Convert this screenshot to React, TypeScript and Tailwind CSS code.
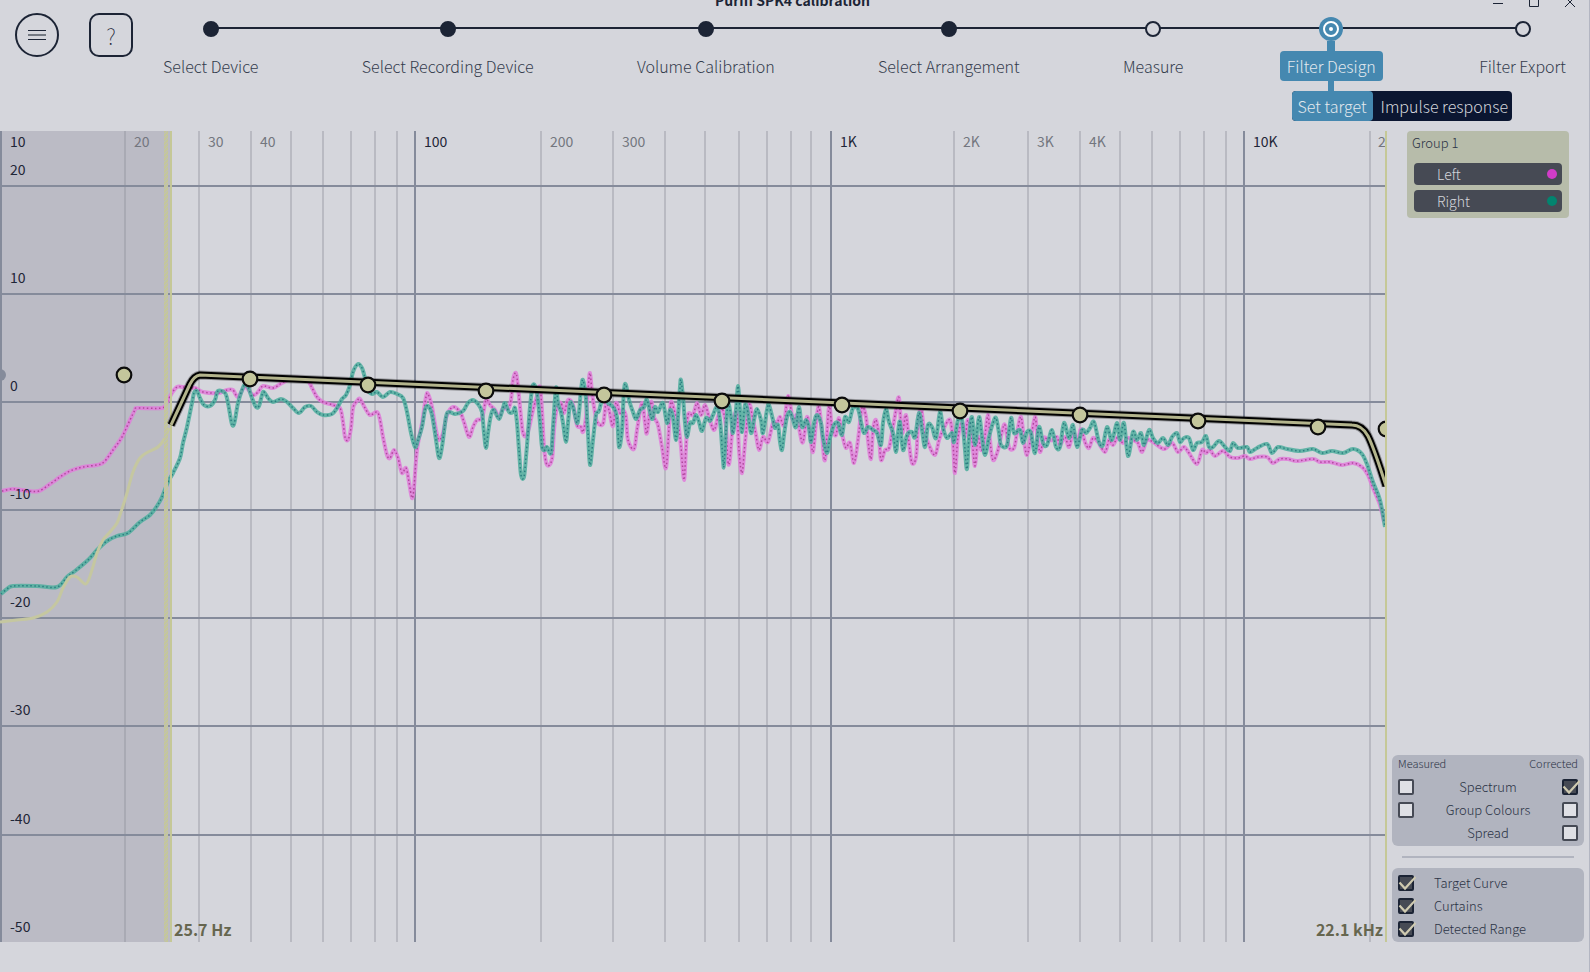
import { useState } from "react";
import clsx from "clsx";

const STEPS = [
  { label: "Select Device", state: "done" },
  { label: "Select Recording Device", state: "done" },
  { label: "Volume Calibration", state: "done" },
  { label: "Select Arrangement", state: "done" },
  { label: "Measure", state: "todo" },
  { label: "Filter Design", state: "active" },
  { label: "Filter Export", state: "todo" },
];

const CHANNELS = [
  { name: "Left", dot: "bg-[#d13cc8]" },
  { name: "Right", dot: "bg-[#03846f]" },
];

// frequency grid: x position, label, decade line or not
const FREQ_LINES: { x: number; label?: string; major?: boolean }[] = [
  { x: 1, label: "10", major: true },
  { x: 125, label: "20" },
  { x: 199, label: "30" },
  { x: 251, label: "40" },
  { x: 291 },
  { x: 323 },
  { x: 351 },
  { x: 375 },
  { x: 397 },
  { x: 415, label: "100", major: true },
  { x: 541, label: "200" },
  { x: 613, label: "300" },
  { x: 665 },
  { x: 705 },
  { x: 739 },
  { x: 767 },
  { x: 791 },
  { x: 811 },
  { x: 831, label: "1K", major: true },
  { x: 954, label: "2K" },
  { x: 1028, label: "3K" },
  { x: 1080, label: "4K" },
  { x: 1120 },
  { x: 1152 },
  { x: 1180 },
  { x: 1204 },
  { x: 1226 },
  { x: 1244, label: "10K", major: true },
  { x: 1370, label: "20K" },
];

const DB_LINES = [
  { y: 186, label: "20" },
  { y: 294, label: "10" },
  { y: 402, label: "0" },
  { y: 510, label: "-10" },
  { y: 618, label: "-20" },
  { y: 726, label: "-30" },
  { y: 835, label: "-40" },
  { y: 943, label: "-50" },
];

const HANDLES = [
  [124, 375],
  [250, 379],
  [368, 385],
  [486, 391],
  [604, 395],
  [722, 401],
  [842, 405],
  [960, 411],
  [1080, 415],
  [1198, 421],
  [1318, 427],
  [1386, 429],
];

const RIGHT_TRACE =
  "1,594 7,589 13,586 37,586 57,587 67,577 75,571 88,560 97,550 107,541 117,536 128,533 140,522 150,515 157,506 162,497 168,482 173,473 180,458 183,443 187,427 192,403 194,393 197,391 200,398 204,405 210,406 215,400 218,391 225,393 228,403 231,420 233,426 235,420 238,403 242,390 245,384 248,387 252,398 256,407 259,406 262,395 264,392 268,398 273,402 281,399 287,402 293,408 299,413 305,407 311,406 317,412 323,415 332,414 337,408 342,399 346,395 350,385 353,372 358,364 362,368 365,378 368,390 372,394 377,392 383,397 390,392 397,394 403,398 407,412 411,433 415,447 418,440 422,427 425,410 428,406 432,415 436,440 439,458 442,447 446,417 449,412 455,414 463,411 468,403 473,400 478,404 482,412 484,433 486,448 488,433 491,415 494,410 499,419 503,408 505,403 509,412 513,412 515,408 517,423 519,450 521,475 524,477 526,457 528,433 530,407 533,385 537,393 540,423 542,447 545,450 547,447 551,453 553,427 556,388 558,403 561,412 563,423 566,442 568,423 570,403 573,407 577,423 579,413 581,390 583,380 586,400 588,433 590,465 593,440 596,415 599,411 603,397 608,403 613,407 617,417 619,447 622,430 624,390 626,385 629,400 633,412 636,419 640,410 644,407 647,400 652,419 655,407 658,412 663,403 667,423 670,410 673,417 676,440 678,417 680,387 681,380 683,397 685,423 687,437 690,423 693,423 696,415 699,422 702,431 706,418 710,421 713,415 717,407 720,420 723,460 724,465 726,430 728,403 731,417 733,433 736,410 738,386 740,410 742,432 745,405 748,413 751,433 754,420 757,409 761,420 763,433 767,410 769,405 773,420 775,428 778,425 780,442 782,450 784,435 787,417 790,412 793,420 796,427 799,407 802,427 806,420 809,428 811,442 814,423 817,415 821,423 823,438 827,453 830,438 834,425 838,423 842,435 845,417 849,422 853,408 858,409 861,422 864,433 868,427 873,430 877,433 881,445 883,423 886,409 889,422 893,433 896,452 898,433 900,422 903,450 907,435 912,432 915,437 919,413 922,430 925,447 928,425 932,427 936,438 940,412 943,428 947,438 952,433 954,442 958,420 962,420 965,450 967,469 969,437 972,417 975,445 979,417 982,437 985,455 989,437 993,423 996,418 999,433 1001,445 1007,445 1011,418 1014,433 1020,430 1023,443 1027,432 1031,433 1035,453 1039,427 1043,443 1047,445 1052,430 1056,447 1060,447 1064,423 1069,438 1073,425 1077,447 1082,430 1086,433 1090,428 1094,422 1099,442 1103,445 1107,427 1112,440 1117,423 1120,440 1124,423 1128,456 1133,432 1137,440 1141,433 1144,445 1149,430 1153,438 1158,443 1163,438 1168,445 1172,437 1177,433 1180,442 1184,438 1189,438 1193,450 1197,443 1202,442 1206,436 1209,447 1213,447 1219,441 1225,447 1230,451 1233,443 1238,448 1247,447 1250,452 1257,448 1267,444 1272,453 1278,447 1287,449 1300,451 1313,449 1322,453 1332,451 1343,453 1353,449 1362,454 1368,467 1373,482 1380,500 1385,527";

const LEFT_TRACE =
  "2,491 13,489 28,491 39,491 50,484 60,477 70,471 83,467 97,465 104,462 113,450 122,437 130,420 135,410 138,408 162,408 167,402 172,393 177,387 183,387 195,388 203,392 218,393 227,390 233,390 238,397 245,387 253,395 258,392 263,386 273,388 282,383 293,378 307,380 312,388 317,397 323,402 333,405 340,408 343,422 345,437 348,440 351,428 353,408 357,401 360,399 365,408 370,415 377,412 380,420 383,437 387,455 390,458 394,450 398,458 402,473 406,468 409,482 412,498 414,487 417,450 422,423 426,397 428,394 432,407 436,430 439,440 443,433 447,415 453,407 460,412 464,422 469,437 473,427 477,420 482,418 486,400 490,405 495,410 499,417 503,408 508,409 511,400 513,380 516,373 518,387 521,417 523,433 526,436 529,428 533,410 538,393 540,387 542,410 544,447 547,465 552,459 554,430 557,407 561,403 564,413 568,400 573,405 577,425 581,427 583,432 586,417 588,390 590,373 592,393 595,413 597,422 603,424 606,403 609,410 613,426 616,403 620,413 623,410 626,417 628,440 634,449 637,430 642,403 645,423 647,433 651,402 654,417 658,425 662,447 666,468 669,427 671,402 675,413 678,422 681,447 684,480 686,447 688,415 693,415 697,403 701,415 705,405 709,417 714,430 718,417 722,408 726,427 728,462 730,458 733,423 737,413 739,450 742,473 745,443 749,405 753,420 756,435 759,450 763,437 768,442 773,423 777,423 780,417 784,425 788,396 793,420 797,415 800,433 803,442 807,417 810,433 813,452 816,423 819,407 822,433 825,460 829,407 832,428 836,435 839,418 843,438 846,448 850,443 854,463 858,440 862,408 866,417 868,440 871,459 873,430 876,420 879,437 881,460 885,450 889,448 893,427 896,410 899,398 902,433 906,415 909,443 912,463 916,457 918,427 921,407 924,430 929,445 935,455 939,440 943,430 950,420 953,443 955,473 958,437 962,423 965,437 968,420 972,440 975,466 978,437 981,450 984,442 988,415 990,440 993,460 998,450 1002,432 1005,425 1009,447 1014,448 1017,433 1021,417 1024,440 1027,455 1031,437 1035,417 1037,433 1040,452 1044,438 1048,440 1053,440 1057,437 1060,445 1065,437 1069,447 1073,433 1078,440 1081,429 1085,442 1089,448 1093,438 1098,442 1105,452 1109,440 1113,445 1118,437 1123,443 1128,438 1133,440 1138,443 1142,452 1147,440 1153,442 1164,449 1172,443 1178,452 1184,447 1189,453 1197,464 1202,450 1206,453 1210,450 1215,456 1223,451 1230,457 1238,458 1245,456 1250,459 1258,457 1267,457 1273,463 1280,459 1288,459 1297,461 1313,459 1320,462 1330,462 1342,465 1353,463 1362,467 1368,475 1373,488 1380,505 1384,522";

const ROLLOFF_TRACE =
  "0,622 17,620 33,618 47,612 57,602 63,588 70,577 77,577 86,584 92,570 97,553 103,540 110,532 117,523 121,512 127,493 133,472 140,458 148,452 158,447 165,438 169,428";

const TARGET_PATH =
  "M171,425 L190,384 Q194,376 200,375 L1352,425 Q1362,425 1368,436 Q1374,448 1386,486";

// rounds the corners a little without overshooting the peaks
function toPath(points: string) {
  const pts = points.split(" ").map((p) => p.split(",").map(Number));
  let d = `M${pts[0][0]},${pts[0][1]}`;
  for (let i = 1; i < pts.length; i++) {
    const [x0, y0] = pts[i - 1];
    const [x1, y1] = pts[i];
    const before = pts[i - 2] ?? pts[i - 1];
    const after = pts[i + 1] ?? pts[i];
    const c1x = x0 + (x1 - before[0]) / 6;
    const c1y = y0 + (y1 - before[1]) / 6;
    const c2x = x1 - (after[0] - x0) / 6;
    const c2y = y1 - (after[1] - y0) / 6;
    d += ` C${c1x.toFixed(1)},${c1y.toFixed(1)} ${c2x.toFixed(1)},${c2y.toFixed(1)} ${x1},${y1}`;
  }
  return d;
}

function Trace({ points, color, dots }: { points: string; color: string; dots: string }) {
  const d = toPath(points);
  return (
    <g fill="none" strokeLinejoin="round">
      <path d={d} stroke={color} strokeWidth="4" strokeOpacity="0.85" />
      <path d={d} stroke={dots} strokeWidth="1.5" strokeDasharray="1.5 2.5" />
    </g>
  );
}

function SpectrumChart() {
  return (
    <svg viewBox="0 131 1387 811" className="block h-auto w-full" role="img" aria-label="Spectrum">
      <defs>
        <pattern id="hatch" width="4" height="4" patternUnits="userSpaceOnUse">
          <rect width="4" height="4" fill="#bebfb8" />
          <path d="M-1,5 L5,-1 M-1,1 L1,-1 M3,5 L5,3" stroke="#c5c897" strokeWidth="1.8" />
        </pattern>
      </defs>

      <rect x="0" y="131" width="170" height="811" fill="#bbbbc5" />

      {FREQ_LINES.map((l) => (
        <line
          key={l.x}
          x1={l.x}
          x2={l.x}
          y1="131"
          y2="942"
          stroke={l.major ? "#858b9b" : "#8f929c"}
          strokeOpacity={l.major ? 1 : 0.4}
          strokeWidth="2"
        />
      ))}
      {DB_LINES.map((l) => (
        <line key={l.y} x1="0" x2="1386" y1={l.y} y2={l.y} stroke="#858b9b" strokeWidth="2" />
      ))}

      <Trace points={LEFT_TRACE} color="#e07cda" dots="#b0479c" />
      <Trace points={RIGHT_TRACE} color="#4fae9e" dots="#2b7e80" />
      <path d={toPath(ROLLOFF_TRACE)} fill="none" stroke="#c5c7a0" strokeWidth="3" />

      <rect x="164" y="131" width="4" height="811" fill="url(#hatch)" />
      <rect x="170" y="131" width="2" height="811" fill="#c5c897" />

      <path d={TARGET_PATH} fill="none" stroke="#000" strokeWidth="9" strokeOpacity="0.3" />
      <path d={TARGET_PATH} fill="none" stroke="#000" strokeWidth="7" />
      <path d={TARGET_PATH} fill="none" stroke="#b3b48c" strokeWidth="3" />

      <circle cx="0" cy="375" r="6" fill="#858b9b" />
      {HANDLES.map(([x, y]) => (
        <circle key={x} cx={x} cy={y} r="7.3" fill="#c4c69c" stroke="#0c0c0c" strokeWidth="2.2" />
      ))}
      <rect x="1385" y="131" width="2" height="811" fill="#c5c897" />

      <g fontSize="14">
        {FREQ_LINES.filter((l) => l.label && l.x < 1370).map((l) => (
          <text key={l.x} x={l.x + 9} y="147" fill={l.major ? "#1f2637" : "#73767f"}>
            {l.label}
          </text>
        ))}
        <svg x="1371" y="131" width="14" height="30">
          <text x="7" y="16" fill="#73767f">
            20K
          </text>
        </svg>
        {DB_LINES.map((l) => (
          <text key={l.y} x="10" y={l.y - 11} fill="#1f2637">
            {l.label}
          </text>
        ))}
      </g>
      <g fontSize="16" fontWeight="700" fill="#66664f">
        <text x="174" y="936">
          25.7 Hz
        </text>
        <text x="1383" y="936" textAnchor="end">
          22.1 kHz
        </text>
      </g>
    </svg>
  );
}

function StepDot({ state }: { state: string }) {
  if (state === "active") {
    return (
      <svg viewBox="0 0 24 24" className="relative size-6">
        <circle cx="12" cy="12" r="12" fill="#4588b0" />
        <circle cx="12" cy="12" r="7" fill="none" stroke="#fff" strokeWidth="2" />
        <circle cx="12" cy="12" r="2" fill="#fff" />
      </svg>
    );
  }
  return (
    <span
      className={clsx(
        "relative size-4 rounded-full border-2 border-[#1c2435]",
        state === "done" ? "bg-[#1c2435]" : "bg-[#d5d6dc]",
      )}
    />
  );
}

function Check({ id, label, initial = false }: { id: string; label?: string; initial?: boolean }) {
  const [on, setOn] = useState(initial);
  return (
    <span className="relative block size-4">
      <input
        id={id}
        type="checkbox"
        aria-label={label}
        checked={on}
        onChange={(e) => setOn(e.target.checked)}
        className="block size-4 appearance-none rounded-xs border-2 border-[#464a55] bg-[#dfe0e5] checked:border-[#1c2435] checked:bg-[#464a54]"
      />
      {on && (
        <svg viewBox="0 0 18 16" className="pointer-events-none absolute top-0 left-0 h-4 w-[18px]" fill="none">
          <path d="M1.5,7.5 L7,13.5 L17.5,2" stroke="#cfcab0" strokeWidth="2.2" />
        </svg>
      )}
    </span>
  );
}

function TitleBar() {
  return (
    <div className="flex h-[10px] items-end overflow-hidden">
      <div className="w-[102px]" />
      <h1 className="flex-1 text-center text-sm leading-5 font-bold">Purifi SPK4 calibration</h1>
      <div className="flex w-[106px] gap-[26px] pl-[10px]">
        <button aria-label="Minimize" className="h-[10px] w-[10px]">
          <svg viewBox="0 0 10 10" className="block">
            <path d="M0,3.5 H10" stroke="#1c2435" />
          </svg>
        </button>
        <button aria-label="Maximize" className="h-[10px] w-[10px]">
          <svg viewBox="0 0 10 10" className="block">
            <path d="M0.5,-3 V6.5 H9.5 V-3" stroke="#1c2435" fill="none" />
          </svg>
        </button>
        <button aria-label="Close" className="h-[10px] w-[10px]">
          <svg viewBox="0 0 10 10" className="block">
            <path d="M0,-3 L10,7 M10,-3 L0,7" stroke="#1c2435" />
          </svg>
        </button>
      </div>
    </div>
  );
}

function Header() {
  return (
    <header className="flex h-[71px] pr-4 pl-[15px]">
      <button
        aria-label="Menu"
        className="mt-[3px] flex size-[44px] shrink-0 items-center justify-center rounded-full border-2 border-[#1c2435]"
      >
        <svg viewBox="0 0 18 12" className="w-[18px]">
          <path d="M0,1.5 H18 M0,10.5 H18" stroke="#1c2435" />
          <path d="M0,6 H18" stroke="#747982" strokeWidth="2" />
        </svg>
      </button>
      <button
        aria-label="Help"
        className="mt-[3px] ml-[30px] size-[44px] shrink-0 rounded-[10px] border-2 border-[#1c2435] text-[22px] leading-[40px] font-thin"
      >
        ?
      </button>

      <nav className="relative ml-[23px] flex-1 pt-[7px]">
        <div className="absolute top-[17px] right-[51px] left-[56px] h-[2px] bg-[#1c2435]" />
        <ol className="flex justify-between">
          {STEPS.map((s) => (
            <li key={s.label} className="flex flex-col items-center">
              <div className="flex h-6 items-center">
                <StepDot state={s.state} />
              </div>
              <div className={clsx("h-[10px] w-2", s.state === "active" && "bg-[#4588b0]")} />
              <button
                className={clsx(
                  "h-[30px] rounded px-[7px] text-base leading-[30px] font-light whitespace-nowrap",
                  s.state === "active" ? "bg-[#4588b0] text-[#e3e8ee]" : "text-[#343c4d]",
                )}
              >
                {s.label}
              </button>
            </li>
          ))}
        </ol>
      </nav>
    </header>
  );
}

function SubTabs() {
  return (
    <div className="flex justify-end pr-[77px] pb-[10px]">
      <div className="flex flex-col">
        <div className="ml-9 h-[10px] w-[6px] bg-[#4588b0]" />
        <div className="flex h-[30px] rounded bg-[#0b1631] text-base leading-[30px] font-light whitespace-nowrap">
          <button className="rounded bg-[#4588b0] px-[6px] text-[#e3e8ee]">Set target</button>
          <button className="pr-1 pl-2 text-[#d5d6dc]">Impulse response</button>
        </div>
      </div>
    </div>
  );
}

function Sidebar() {
  return (
    <aside className="flex w-[202px] shrink-0 flex-col justify-between">
      <section className="mx-5 h-[87px] rounded bg-[#b7bcaa] px-[7px]">
        <h2 className="-ml-[2px] h-8 text-[13px] leading-6 font-light text-[#2b3345]">Group 1</h2>
        <ul className="flex flex-col gap-[5px]">
          {CHANNELS.map((c) => (
            <li key={c.name}>
              <button className="flex h-[22px] w-full items-center justify-between rounded bg-[#464a54] pr-[5px] pl-[23px] text-sm leading-[22px] font-light text-[#d5d6dc]">
                {c.name}
                <span className={clsx("size-[10px] rounded-full", c.dot)} />
              </button>
            </li>
          ))}
        </ul>
      </section>

      <div className="mx-[5px] text-[13px] leading-[23px] font-light text-[#2b3345]">
        <section className="h-[91px] rounded-md bg-[#b1b4bf] px-[6px]">
          <div className="flex h-5 justify-between text-[11px] leading-4">
            <span>Measured</span>
            <span>Corrected</span>
          </div>
          <div className="grid grid-cols-[16px_1fr_16px] items-center text-center">
            <Check id="spectrum-m" label="Spectrum measured" />
            <label htmlFor="spectrum-c">Spectrum</label>
            <Check id="spectrum-c" initial />
            <Check id="group-m" label="Group Colours measured" />
            <label htmlFor="group-c">Group Colours</label>
            <Check id="group-c" />
            <span />
            <label htmlFor="spread-c">Spread</label>
            <Check id="spread-c" />
          </div>
        </section>
        <hr className="mx-[10px] my-[10px] border-t-2 border-[#b1b4bf]" />
        <section className="grid h-[74px] grid-cols-[16px_1fr] content-start items-center gap-x-5 rounded-md bg-[#b1b4bf] px-[6px] pt-[3px]">
          <Check id="target" initial />
          <label htmlFor="target">Target Curve</label>
          <Check id="curtains" initial />
          <label htmlFor="curtains">Curtains</label>
          <Check id="range" initial />
          <label htmlFor="range">Detected Range</label>
        </section>
      </div>
    </aside>
  );
}

export default function App() {
  return (
    <div className="min-h-screen border-r border-[#b3b6c2] bg-[#d5d6dc] font-['Noto_Sans_CJK_SC',sans-serif] text-[#1c2435]">
      <TitleBar />
      <Header />
      <SubTabs />
      <main className="flex">
        <div className="min-w-0 flex-1">
          <SpectrumChart />
        </div>
        <Sidebar />
      </main>
    </div>
  );
}
